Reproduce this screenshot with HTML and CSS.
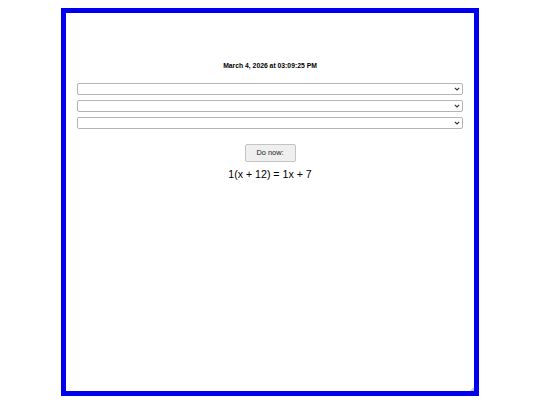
FILE: index.html
```html
<!DOCTYPE html>
<html>
<head>
<meta charset="utf-8">
<link rel="stylesheet" href="styles.css">
</head>
<body>
<div class="frame">
  <div class="date">March 4, 2026 at 03:09:25 PM</div>
  <div class="selects">
    <div class="selwrap">
      <select class="sel"><option></option></select>
      <svg class="chev" width="6" height="4" viewBox="0 0 6 4"><path d="M0.8 0.8 L3 3 L5.2 0.8" fill="none" stroke="#333" stroke-width="1.1"/></svg>
    </div>
    <div class="selwrap">
      <select class="sel"><option></option></select>
      <svg class="chev" width="6" height="4" viewBox="0 0 6 4"><path d="M0.8 0.8 L3 3 L5.2 0.8" fill="none" stroke="#333" stroke-width="1.1"/></svg>
    </div>
    <div class="selwrap">
      <select class="sel"><option></option></select>
      <svg class="chev" width="6" height="4" viewBox="0 0 6 4"><path d="M0.8 0.8 L3 3 L5.2 0.8" fill="none" stroke="#333" stroke-width="1.1"/></svg>
    </div>
  </div>
  <div class="actions">
    <button class="btn">Do now:</button>
  </div>
  <div class="equation">1(x + 12) = 1x + 7</div>
  <div class="grip"></div>
</div>
</body>
</html>
```

FILE: styles.css
```css
html, body {
  margin: 0;
  padding: 0;
  background: #ffffff;
}
body {
  font-family: "Liberation Sans", Arial, sans-serif;
  color: #000;
}
.frame {
  position: relative;
  box-sizing: border-box;
  width: 418px;
  height: 388px;
  margin: 8px 0 0 61px;
  border: 5px solid #0000ee;
  padding: 0 11px;
  overflow: hidden;
}
.date {
  margin-top: 48px;
  text-align: center;
  font-weight: bold;
  font-size: 6.8px;
  line-height: 10px;
}
.selects {
  margin-top: 12px;
  display: flex;
  flex-direction: column;
  gap: 5px;
}
.selwrap {
  position: relative;
  height: 12px;
}
.sel {
  appearance: none;
  -webkit-appearance: none;
  box-sizing: border-box;
  display: block;
  width: 100%;
  height: 12px;
  margin: 0;
  font-size: 7px;
  border: 1px solid #b5b5b5;
  border-radius: 2px;
  background: #fff;
}
.chev {
  position: absolute;
  right: 3px;
  top: 4px;
}
.actions {
  margin-top: 12px;
  text-align: center;
}
.btn {
  box-sizing: border-box;
  width: 51px;
  height: 18px;
  font-family: "Liberation Sans", Arial, sans-serif;
  font-size: 7.4px;
  color: #222;
  background: #efefef;
  border: 1px solid #c4c4c4;
  border-radius: 2px;
  padding: 0;
}
.equation {
  margin-top: 6px;
  text-align: center;
  font-size: 10.6px;
  line-height: 13px;
}
.grip {
  position: absolute;
  right: 0;
  bottom: 0;
  width: 0;
  height: 0;
  border-left: 4px solid transparent;
  border-bottom: 4px solid #c8c8e8;
}
```
